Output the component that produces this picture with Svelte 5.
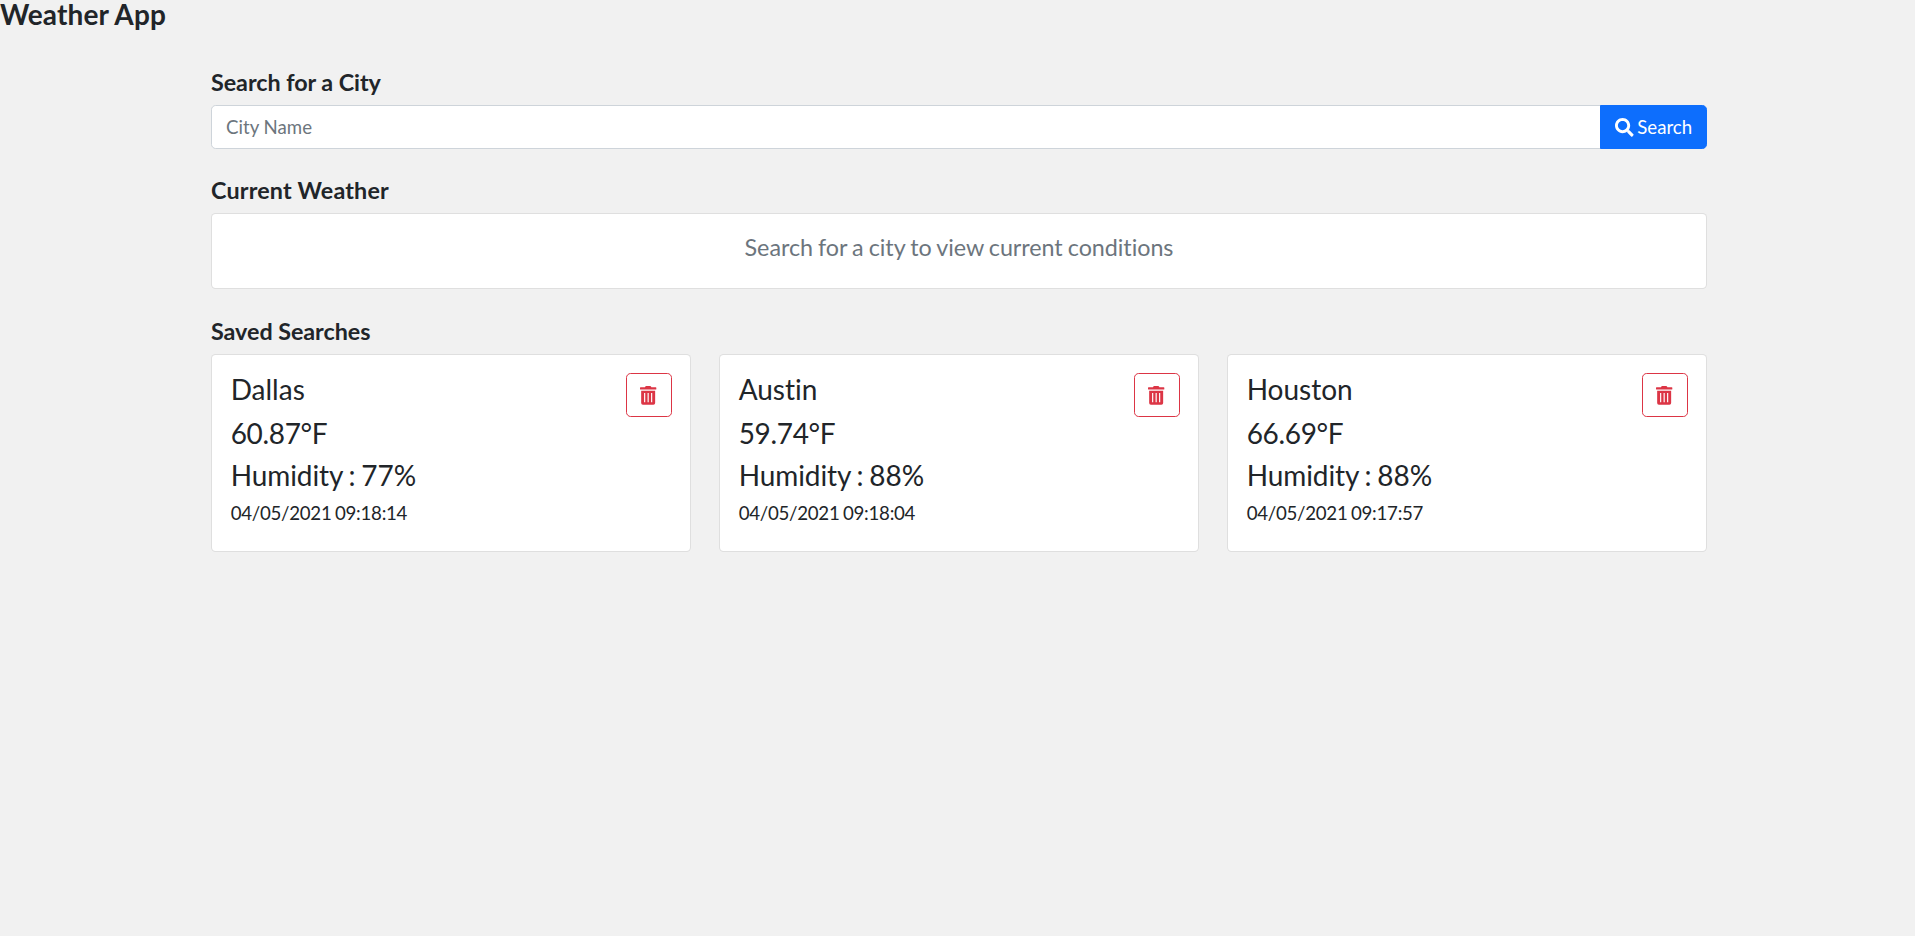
<script>
  const saved = [
    { city: 'Dallas', temp: '60.87', humidity: 77, time: '04/05/2021 09:18:14' },
    { city: 'Austin', temp: '59.74', humidity: 88, time: '04/05/2021 09:18:04' },
    { city: 'Houston', temp: '66.69', humidity: 88, time: '04/05/2021 09:17:57' }
  ];
</script>

<h4 class="brand">Weather App</h4>
<main>
  <section class="search">
    <h5>Search for a City</h5>
    <div class="group">
      <input type="text" placeholder="City Name" />
      <button class="go">
        <svg class="glass" viewBox="0 0 512 512" aria-hidden="true"><path fill="currentColor" d="M505 442.7L405.300 343c-4.500-4.500-10.600-7-17-7H372c27.600-35.300 44-79.700 44-128C416 93.100 322.900 0 208 0S0 93.100 0 208s93.100 208 208 208c48.300 0 92.700-16.400 128-44v16.300c0 6.400 2.500 12.500 7 17l99.700 99.700c9.400 9.400 24.600 9.400 33.900 0l28.300-28.300c9.400-9.400 9.400-24.600.1-34zM208 336c-70.700 0-128-57.200-128-128 0-70.700 57.200-128 128-128 70.700 0 128 57.200 128 128 0 70.700-57.200 128-128 128z"/></svg>
        Search
      </button>
    </div>
  </section>
  <section class="current">
    <h5 class="wide">Current Weather</h5>
    <div class="card status"><p>Search for a city to view current conditions</p></div>
  </section>
  <section>
    <h5>Saved Searches</h5>
    <div class="grid">
      {#each saved as s}
        <div class="card item">
          <div class="info">
            <h4 class="city">{s.city}</h4>
            <h4 class="temp">{s.temp}°F</h4>
            <h4 class="humidity">Humidity : {s.humidity}%</h4>
            <div class="time">{s.time}</div>
          </div>
          <button class="del" aria-label="Delete">
            <svg viewBox="0 0 448 512" aria-hidden="true"><path fill="currentColor" d="M432 32H312l-9.400-18.700A24 24 0 0 0 281.100 0H166.800a23.720 23.720 0 0 0-21.400 13.300L136 32H16A16 16 0 0 0 0 48v32a16 16 0 0 0 16 16h416a16 16 0 0 0 16-16V48a16 16 0 0 0-16-16z"/><path fill="currentColor" fill-rule="evenodd" d="M32 128h384v336a48 48 0 0 1-48 48H80a48 48 0 0 1-48-48zm80 64v256h32V192zm96 0v256h32V192zm96 0v256h32V192z"/></svg>
          </button>
        </div>
      {/each}
    </div>
  </section>
</main>

<style>
  :global(html) { font-size: 18.6667px; }
  :global(body) {
    background: #f1f1f1;
    color: #212529;
    font-family: Lato, sans-serif;
    font-variant-ligatures: none;
    line-height: 1.5;
  }
  h4, h5, p { margin: 0 0 .5rem; line-height: 1.2; }
  h4 { font-size: 1.5rem; font-weight: 400; }
  h5 { font-size: 1.25rem; font-weight: 700; letter-spacing: -.05px; }
  .wide { letter-spacing: .17px; }
  .brand { font-weight: 700; margin: 0; height: 67.6px; line-height: 29px; letter-spacing: .1px; }
  main { margin: 0 208px 0 211px; }
  .search { margin-bottom: 26.8px; }
  .current { margin-bottom: 1.5rem; }
  .group { display: flex; }
  input, button { font: inherit; box-sizing: border-box; height: 44px; }
  input {
    flex: 1;
    min-width: 0;
    padding: .375rem .75rem;
    border: 1px solid #ced4da;
    border-radius: 4.67px 0 0 4.67px;
    background: #fff;
    color: #212529;
  }
  input::placeholder { color: #6c757d; opacity: 1; }
  button { padding: .375rem .75rem; border-radius: 4.67px; }
  .go {
    width: 107px;
    padding: .375rem 0;
    margin-left: -1px;
    word-spacing: -1px;
    color: #fff;
    background: #0d6efd;
    border: 1px solid #0d6efd;
    border-radius: 0 4.67px 4.67px 0;
  }
  svg { display: inline-block; height: 1em; vertical-align: -.125em; overflow: visible; }
  .card {
    box-sizing: border-box;
    padding: 1rem;
    background: #fff;
    border: 1px solid rgba(0, 0, 0, .125);
    border-radius: 4.67px;
  }
  .status { height: 75.6px; }
  .card p { text-align: center; font-size: 1.25rem; color: #6c757d; letter-spacing: -.05px; word-spacing: -.8px; }
  .grid { display: grid; grid-template-columns: repeat(3, 1fr); gap: 1.5rem; }
  .item { display: flex; justify-content: space-between; align-items: flex-start; height: 197.6px; padding: 18px 18.4px 18px 18.67px; }
  .info { margin-top: .5px; }
  .city { margin-bottom: 9.6px; }
  .temp { letter-spacing: -.33px; margin-bottom: 8.6px; }
  .humidity { letter-spacing: -.07px; word-spacing: -1.3px; margin-bottom: 7px; }
  .time { line-height: 1.5; letter-spacing: -.26px; word-spacing: -1px; }
  .del { width: 46px; padding: 0; color: #dc3545; background: transparent; border: 1px solid #dc3545; }
</style>
